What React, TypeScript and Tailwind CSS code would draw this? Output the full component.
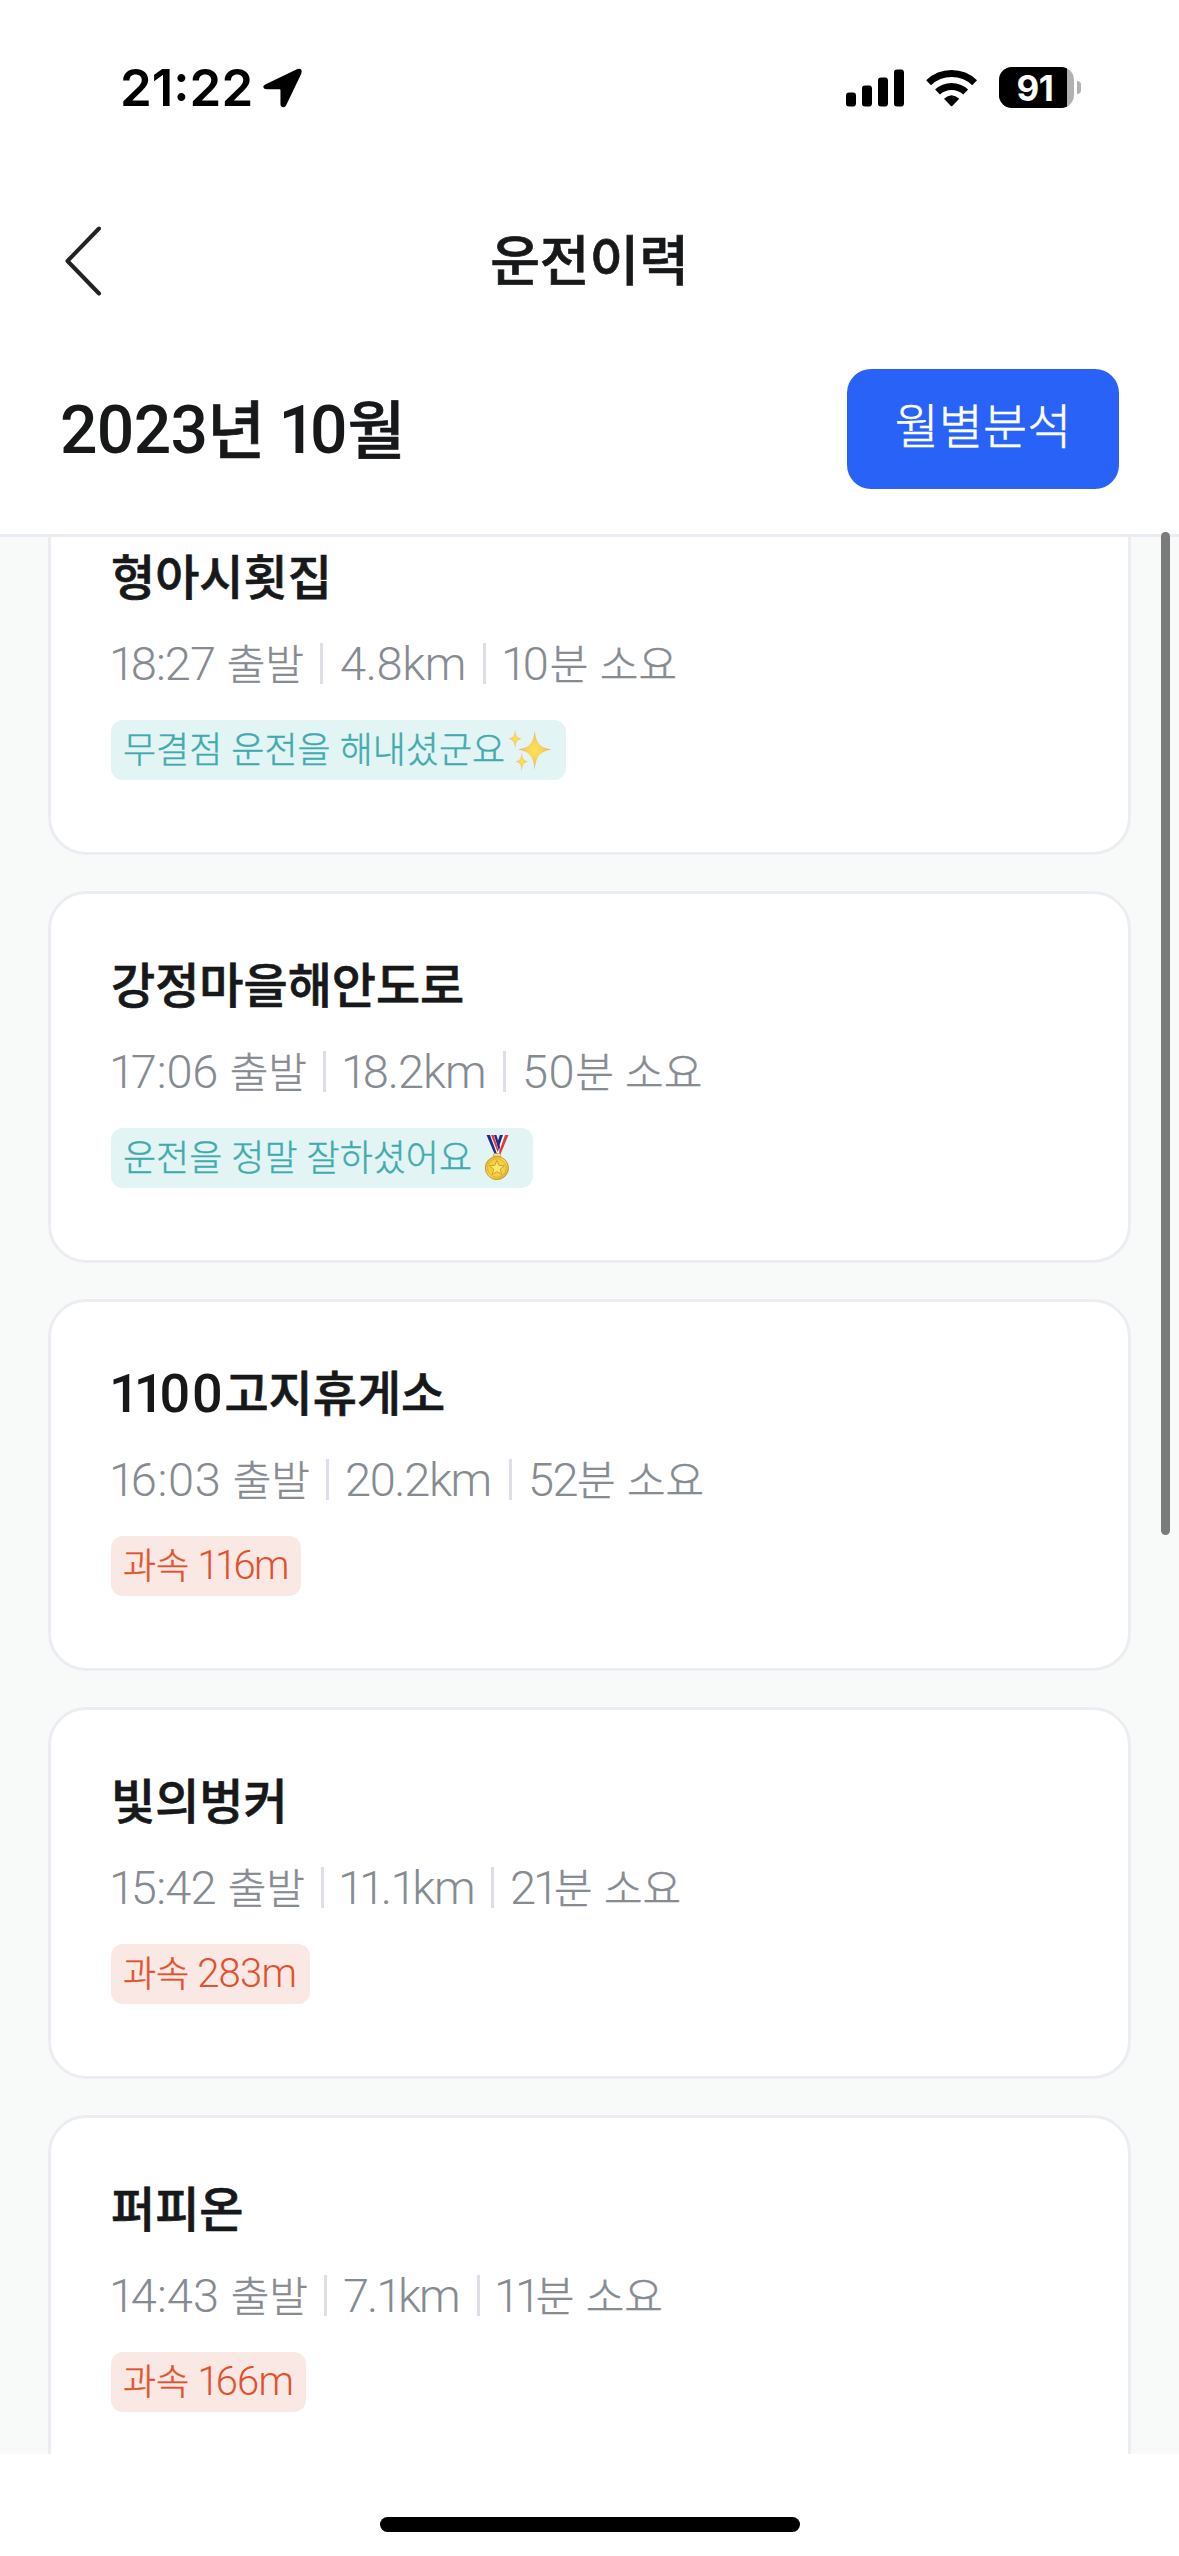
import React from 'react';

type Trip = {
  title: React.ReactNode;
  departTime: string;
  departClass: string;
  departTracking: string;
  distance: string;
  distanceClass: string;
  distanceTracking: string;
  minutes: string;
  minutesClass: string;
  minutesTracking: string;
  badge: React.ReactNode;
};

/** Proportional figures: tightens the space that follows each "1". */
function Num({ value, className }: { value: string; className: string }) {
  return (
    <span className={`font-['Roboto',sans-serif] leading-[0] [-webkit-text-stroke:0] ${className}`}>
      {[...value].map((char, i) => {
        if (char !== '1') return char;
        const next = value[i + 1];
        return (
          <span key={i} className={next === '1' || next === undefined ? 'tracking-[-0.11em]' : 'tracking-[-0.09em]'}>
            1
          </span>
        );
      })}
    </span>
  );
}

function Sparkles() {
  return (
    <svg className="mt-[6px] ml-[2px] h-12 w-[46px] shrink-0" viewBox="507 726 46 48" aria-hidden="true">
      <defs>
        <radialGradient id="spark">
          <stop offset="0%" stopColor="#fbe352" />
          <stop offset="40%" stopColor="#f8d55a" />
          <stop offset="100%" stopColor="#eda874" />
        </radialGradient>
      </defs>
      <g fill="url(#spark)">
        <path d="M534.7 730.5C535.8 742.500 539.500 747.800 551.3 749.4C539.500 751.200 535.8 757 534.7 770C533.6 757 529.9 751.200 518 749.4C529.9 747.800 533.6 742.500 534.7 730.5Z" />
        <path d="M515.1 729.5C515.7 735.6 517.1 737.8 521.5 738.8C517.1 739.9 515.7 742.2 515.1 748.5C514.5 742.2 513.1 739.9 508.8 738.8C513.1 737.8 514.5 735.6 515.1 729.5Z" />
        <path d="M521.8 752.5C522.4 758.4 523.8 760.6 528 761.6C523.8 762.7 522.4 765 521.8 771C521.2 765 519.8 762.7 515.6 761.6C519.8 760.6 521.2 758.4 521.8 752.5Z" />
      </g>
    </svg>
  );
}

function Medal() {
  return (
    <svg className="mt-[6px] ml-[11px] h-[48px] w-[28px] shrink-0" viewBox="483 1134 28 48" aria-hidden="true">
      <defs>
        <linearGradient id="gold" x1="0" y1="0" x2="1" y2="1">
          <stop offset="0" stopColor="#e2b12d" />
          <stop offset="0.5" stopColor="#f7dc4e" />
          <stop offset="1" stopColor="#d9a526" />
        </linearGradient>
      </defs>
      <path d="M503.500 1135H508L500 1154H496.500Z" fill="#fff" />
      <path d="M505 1135H508.500L500.600 1154H498.300Z" fill="#e23b35" />
      <path d="M499.800 1135H503L497.800 1150L496 1147Z" fill="#1d2a8c" />
      <path d="M486.700 1135H495.500L499.500 1154H495Z" fill="#fff" />
      <path d="M486.500 1135H490L497 1154H494.600Z" fill="#1d2a8c" />
      <path d="M491 1135H493.600L498.500 1150L497.500 1152Z" fill="#e23b35" />
      <path d="M494 1135H496.400L500 1147L499 1151Z" fill="#1d2a8c" />
      <rect x="493.600" y="1153.500" width="7" height="3.500" rx="1" fill="#f4d98c" stroke="#c99a2e" strokeWidth="0.700" />
      <circle cx="496.900" cy="1168" r="11.600" fill="url(#gold)" stroke="#b98a22" strokeWidth="0.800" />
      <circle cx="496.900" cy="1168" r="9.300" fill="#f3d03f" stroke="#cf9e2a" strokeWidth="0.600" />
      <path
        d="M496.900 1160.500L499 1165.400L504.300 1165.800L500.200 1169.200L501.500 1174.400L496.900 1171.600L492.300 1174.400L493.600 1169.200L489.500 1165.800L494.800 1165.400Z"
        fill="#fbe76a"
        stroke="#c4942a"
        strokeWidth="0.800"
      />
    </svg>
  );
}

function PraiseBadge({ className, text, children }: { className: string; text: string; children: React.ReactNode }) {
  return (
    <div className={`flex h-[60px] rounded-xl bg-[#e2f4f4] pl-3 text-4xl font-light text-[#40abad] ${className}`}>
      <span className="leading-[54px] [word-spacing:1px] [-webkit-text-stroke:0.4px]">{text}</span>
      {children}
    </div>
  );
}

function SpeedBadge({ className, value, tracking }: { className: string; value: string; tracking: string }) {
  return (
    <div
      className={`h-[60px] rounded-xl bg-[#fae8e4] pl-3 text-4xl leading-[54px] font-light text-[#e2502c] [-webkit-text-stroke:0.4px] ${className}`}
    >
      과속 <Num value={value} className={`text-[40px] ${tracking}`} />
    </div>
  );
}

const trips: Trip[] = [
  {
    title: '형아시횟집',
    departTime: '18:27', departClass: 'w-[209px]', departTracking: 'tracking-[-1px]',
    distance: '4.8km', distanceClass: 'w-[160px] pl-[17px]', distanceTracking: 'tracking-[-0.4px]',
    minutes: '10', minutesClass: 'pl-[15px]', minutesTracking: 'tracking-[0.9px]',
    badge: (
      <PraiseBadge className="w-[455px]" text="무결점 운전을 해내셨군요">
        <Sparkles />
      </PraiseBadge>
    ),
  },
  {
    title: '강정마을해안도로',
    departTime: '17:06', departClass: 'w-[212px]', departTracking: 'tracking-[-0.2px]',
    distance: '18.2km', distanceClass: 'w-[177px] pl-[15px]', distanceTracking: 'tracking-[-1.1px]',
    minutes: '50', minutesClass: 'pl-[16px]', minutesTracking: 'tracking-[0.5px]',
    badge: (
      <PraiseBadge className="w-[422px]" text="운전을 정말 잘하셨어요">
        <Medal />
      </PraiseBadge>
    ),
  },
  {
    title: (
      <>
        <Num value="1100" className="-ml-[2px] align-[-1px] text-[54px] tracking-[1.7px]" />
        고지휴게소
      </>
    ),
    departTime: '16:03', departClass: 'w-[215px]', departTracking: 'tracking-[0.6px]',
    distance: '20.2km', distanceClass: 'w-[180px] pl-4', distanceTracking: 'tracking-[-1.4px]',
    minutes: '52', minutesClass: 'pl-4', minutesTracking: 'tracking-[-1.6px]',
    badge: <SpeedBadge className="w-[190px]" value="116m" tracking="tracking-[-1.8px]" />,
  },
  {
    title: '빛의벙커',
    departTime: '15:42', departClass: 'w-[210px]', departTracking: 'tracking-[-0.8px]',
    distance: '11.1km', distanceClass: 'w-[167px] pl-[14px]', distanceTracking: 'tracking-[-1.5px]',
    minutes: '21', minutesClass: 'pl-[16px]', minutesTracking: 'tracking-[-3px]',
    badge: <SpeedBadge className="w-[199px]" value="283m" tracking="tracking-[-0.8px]" />,
  },
  {
    title: '퍼피온',
    departTime: '14:43', departClass: 'w-[213px]', departTracking: 'tracking-normal',
    distance: '7.1km', distanceClass: 'w-[150px] pl-[16px]', distanceTracking: 'tracking-[-2.1px]',
    minutes: '11', minutesClass: 'pl-[14px]', minutesTracking: 'tracking-normal',
    badge: <SpeedBadge className="w-[195px]" value="166m" tracking="tracking-[-0.9px]" />,
  },
];

function TripCard({ trip }: { trip: Trip }) {
  return (
    <article className="h-[372px] shrink-0 rounded-[38px] border-[3px] border-[#ecedf2] bg-white pt-[58px] pl-[60px]">
      <h2 className="text-5xl leading-[60px] font-medium text-[#17181a] [-webkit-text-stroke:0.7px_#17181a]">
        {trip.title}
      </h2>
      <div className="mt-[39px] flex h-[41px] text-[42px] leading-[37px] font-light whitespace-nowrap text-[#868b92] [-webkit-text-stroke:0.4px] [word-spacing:2px]">
        <div className={`flex items-baseline justify-between pr-4 ${trip.departClass}`}>
          <Num value={trip.departTime} className={`-ml-[2px] text-[47px] ${trip.departTracking}`} />
          <span>출발</span>
        </div>
        <div className="w-[3px] bg-[#dedfe6]" />
        <div className={trip.distanceClass}>
          <Num value={trip.distance} className={`text-[47px] ${trip.distanceTracking}`} />
        </div>
        <div className="w-[3px] bg-[#dedfe6]" />
        <div className={trip.minutesClass}>
          <Num value={trip.minutes} className={`text-[47px] ${trip.minutesTracking}`} />분 소요
        </div>
      </div>
      <div className="mt-9 flex">{trip.badge}</div>
    </article>
  );
}

function StatusBar() {
  return (
    <div className="flex h-[177px] shrink-0 justify-between pr-[98px] pl-[120px] font-['Inter',sans-serif] text-black">
      <div className="flex h-[175px] items-center">
        <span className="text-[51px] leading-[60px] font-semibold">21:22</span>
        <svg className="ml-[9px] h-[41px] w-[41px]" viewBox="0 0 40 40" aria-hidden="true">
          <path
            d="M3.200 17L34 2.200Q36.800 1.100 38.200 2.500Q39.300 3.900 38.300 6.500L23.600 37.200Q22.700 39.200 20.800 39.200Q18 39 18 36V22.700Q18 21.800 17.100 21.800H4.700Q1.800 21.800 1.200 19.600Q1 18 3.200 17Z"
            fill="currentColor"
          />
        </svg>
      </div>
      <div className="flex h-[175px] items-center">
        <svg className="h-[38px] w-[58px]" viewBox="0 0 58 38" fill="currentColor" aria-hidden="true">
          <rect x="0" y="23.500" width="10" height="14" rx="3" />
          <rect x="16" y="16.500" width="10" height="21" rx="3" />
          <rect x="32" y="8.500" width="10" height="29" rx="3" />
          <rect x="48" y="0.500" width="10" height="37" rx="3" />
        </svg>
        <svg className="ml-[22px] h-[38px] w-[52px]" viewBox="0 0 52 38" fill="none" aria-hidden="true">
          <path d="M2.600 13.700A33.400 33.400 0 0 1 48.600 13.700" stroke="currentColor" strokeWidth="7" />
          <path d="M11.500 23A20.500 20.500 0 0 1 39.700 23" stroke="currentColor" strokeWidth="7" />
          <path d="M18 29.800Q25.600 22.600 33.200 29.800L26.300 37Q25.600 37.600 24.900 37Z" fill="currentColor" />
        </svg>
        <div className="ml-[21px] flex h-[41px] w-[75px] overflow-hidden rounded-[13px] bg-[#b1b1b1]">
          <div className="flex w-[68px] items-center justify-center bg-black pl-[4px] text-[35px] leading-[42px] font-bold tracking-[-0.5px] text-white">
            91
          </div>
        </div>
        <div className="ml-[3px] h-[13px] w-1 rounded-r-full bg-[#b1b1b1]" />
      </div>
    </div>
  );
}

export default function App() {
  return (
    <main className="relative flex h-[2556px] w-[1179px] flex-col overflow-hidden bg-white font-['Noto_Sans_CJK_KR',sans-serif]">
      <StatusBar />
      <header className="grid h-[168px] shrink-0 grid-cols-3 items-center">
        <svg className="ml-[63px] h-[72px] w-10" viewBox="0 0 40 72" fill="none" aria-label="뒤로">
          <path d="M36 3.500L4.500 36L36 68.500" stroke="#222" strokeWidth="4" strokeLinecap="round" strokeLinejoin="round" />
        </svg>
        <h1 className="pb-[7px] text-center text-[54px] leading-[68px] font-medium text-[#17181a] [-webkit-text-stroke:0.7px_#17181a]">
          운전이력
        </h1>
      </header>
      <section className="flex h-[192px] shrink-0 justify-between border-b-[3px] border-[#ecedf2] pt-6 pr-[60px] pl-[60px]">
        <div className="pb-[7px] text-[63px] leading-[113px] font-medium text-[#17181a] [-webkit-text-stroke:0.7px_#17181a] [word-spacing:-1px]">
          <Num value="2023" className="text-[66px] tracking-[-0.7px]" />년{' '}
          <Num value="10" className="text-[66px] tracking-normal" />월
        </div>
        <button className="h-[120px] w-[272px] rounded-3xl bg-[#2962f6] pb-3 text-5xl leading-[108px] font-light text-white [-webkit-text-stroke:0.5px]">
          월별분석
        </button>
      </section>
      <div className="h-[1917px] shrink-0 overflow-hidden bg-[#f8faf9] px-12">
        <div className="-mt-[54px] flex flex-col gap-9">
          {trips.map((trip) => (
            <TripCard key={trip.departTime} trip={trip} />
          ))}
        </div>
      </div>
      <footer className="flex flex-1 items-end justify-center pb-6">
        <div className="h-[15px] w-[420px] rounded-full bg-black" />
      </footer>
      <div className="absolute top-[532px] right-[9px] h-[1003px] w-[9px] rounded-full bg-[#7b7b7b]" />
    </main>
  );
}
